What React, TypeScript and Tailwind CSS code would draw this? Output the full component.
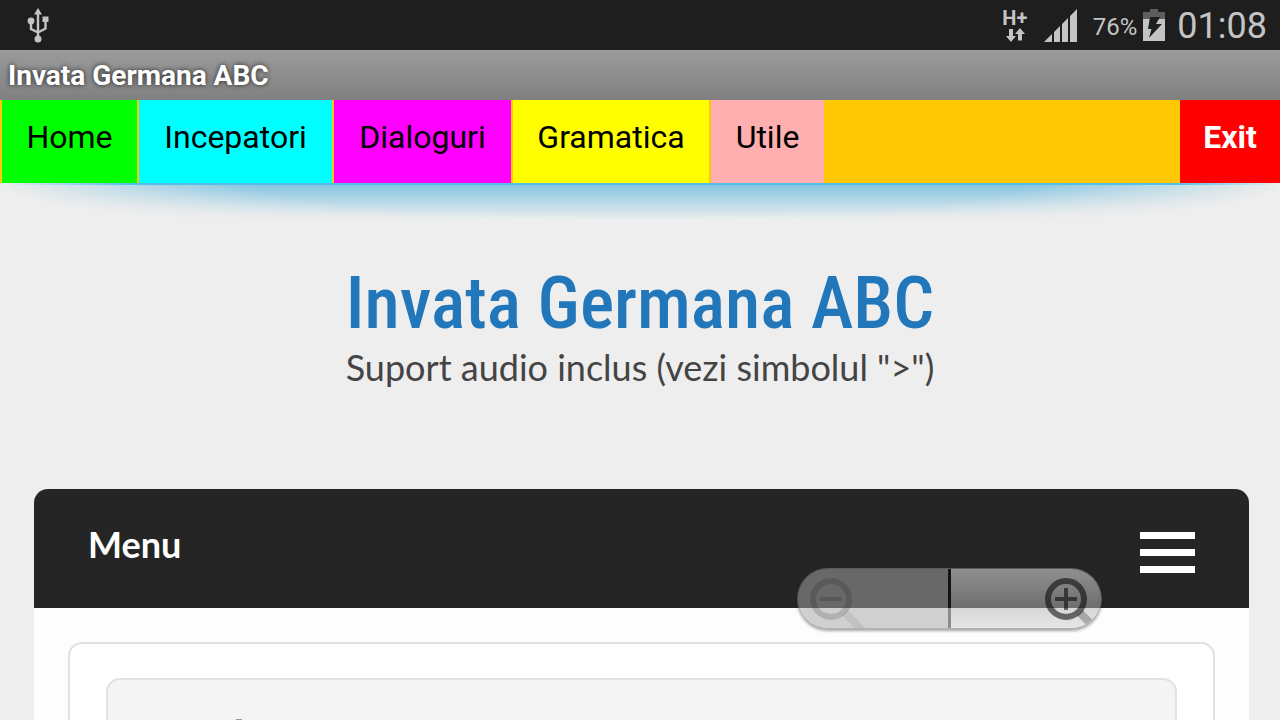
const tabs = [
  { label: "Home", width: "w-[135px]", color: "bg-[#00ff00]" },
  { label: "Incepatori", width: "w-[193px]", color: "bg-[#00ffff]" },
  { label: "Dialoguri", width: "w-[177px]", color: "bg-[#ff00ff]" },
  { label: "Gramatica", width: "w-[196px]", color: "bg-[#ffff00]" },
  { label: "Utile", width: "w-[113px]", color: "bg-[#ffafaf]" },
];

function UsbIcon() {
  return (
    <svg className="ml-[27px] h-[35px] w-[22px]" viewBox="0 0 22 35" fill="none" stroke="#c4c4c4" strokeWidth="2.4">
      <path d="M11 5V29M4 14V21L11 24.500L18.500 20.500V13" />
      <path d="M11 0L15 6.500H7Z" fill="#c4c4c4" stroke="none" />
      <circle cx="4" cy="13" r="3.4" fill="#c4c4c4" stroke="none" />
      <circle cx="11" cy="31" r="3.5" fill="#c4c4c4" stroke="none" />
      <path d="M15.500 8.500H21.500V14H15.500Z" fill="#c4c4c4" stroke="none" />
    </svg>
  );
}

function NetworkType() {
  return (
    <div className="flex w-7 flex-col items-center">
      <span className="text-[20px] leading-[20px] font-bold">H+</span>
      <svg className="h-[14px] w-5" viewBox="0 0 20 14" fill="#c4c4c4">
        <path d="M4 1H8V8H11L6 14L1 8H4Z" />
        <path d="M13 12.500H17V6H20L15 0L10 6H13Z" />
      </svg>
    </div>
  );
}

function SignalIcon() {
  return (
    <svg className="ml-[15px] h-[33px] w-[33px]" viewBox="0 0 33 33" fill="#c4c4c4">
      <path d="M0 33L8 25V33ZM10 23L16 17V33H10ZM18 15L24 9V33H18ZM26 7L33 0V33H26Z" />
    </svg>
  );
}

function BatteryIcon() {
  return (
    <svg className="ml-[6px] h-8 w-[22px]" viewBox="0 0 22 32">
      <path d="M0 3H7V0H15V3H22V10H0Z" fill="#5e5e5e" />
      <path d="M0 10H22V32H0Z" fill="#c4c4c4" />
      <path d="M7 8H17L13 15H19L6 29L8.500 20H5Z" fill="#1e1e1e" />
    </svg>
  );
}

function StatusBar() {
  return (
    <div className="flex h-[50px] items-center bg-[#1e1e1e] pr-[13px] font-[Roboto,sans-serif] text-[#c4c4c4]">
      <UsbIcon />
      <div className="ml-auto flex items-center">
        <NetworkType />
        <SignalIcon />
        <span className="ml-4 pt-[3px] text-[24px] leading-8">76%</span>
        <BatteryIcon />
        <span className="ml-3 pt-[2px] text-[36px] leading-[48px]">01:08</span>
      </div>
    </div>
  );
}

function Magnifier({ sign }: { sign: "plus" | "minus" }) {
  return (
    <svg className="h-[62px] w-14" viewBox="0 0 56 62" fill="none" stroke="currentColor">
      <path d="M35 45L53 63" strokeWidth="8" opacity="0.45" />
      <circle cx="21" cy="31" r="18" strokeWidth="6" />
      <path d={sign === "plus" ? "M10 31H32M21 20V42" : "M10 31H32"} strokeWidth="4" />
    </svg>
  );
}

function ZoomControls() {
  return (
    <div className="fixed top-[568px] right-[178px] flex h-[62px] w-[305px] overflow-hidden rounded-full border border-b-2 border-[#808080]/60 shadow-[0_1px_3px_rgba(0,0,0,0.35)]">
      <button
        aria-label="Zoom out"
        disabled
        className="flex w-[150px] items-center bg-[#a6a6a6]/52 pl-3 text-black/15"
      >
        <Magnifier sign="minus" />
      </button>
      <span className="w-[3px] bg-black/45" />
      <button
        aria-label="Zoom in"
        className="flex flex-1 items-center justify-end bg-linear-to-b from-[#f4f4f4]/52 via-[#b4b4b4]/52 via-65% to-[#d2d2d2]/52 text-black/55"
      >
        <Magnifier sign="plus" />
      </button>
    </div>
  );
}

export default function App() {
  return (
    <div className="h-screen overflow-hidden bg-[#eeeeee]">
      <StatusBar />
      <header className="flex h-[50px] items-center bg-linear-to-b from-[#9b9b9b] to-[#808080] px-2 pt-[2px] font-[Roboto,sans-serif] text-[28px] font-bold text-white [text-shadow:0_0_5px_#222]">
        Invata Germana ABC
      </header>

      <nav className="flex h-[83px] gap-[2px] bg-[#ffc805] pl-[2px] font-[Roboto,sans-serif] text-[32px]">
        {tabs.map((tab) => (
          <button key={tab.label} className={`${tab.width} ${tab.color} pb-[10px] text-black`}>
            {tab.label}
          </button>
        ))}
        <button className="ml-auto w-[100px] bg-[#ff0000] pb-[10px] font-bold text-white">Exit</button>
      </nav>

      {/* Blue glow under the tabs */}
      <div className="h-[2px] bg-[linear-gradient(90deg,transparent,#54bfe9_10%,#54bfe9_92%,transparent)]" />
      <div className="h-9 bg-linear-to-b from-[#85c5e0] to-[#eeeeee] mask-[radial-gradient(ellipse_50%_140%_at_50%_0%,#000_60%,transparent)]" />

      <section className="flex flex-col items-center pt-[43px] text-center">
        <h1 className="font-['Roboto_Condensed','Liberation_Sans_Narrow',sans-serif] text-[72px] leading-[80px] font-medium whitespace-nowrap text-[#2277bb]">
          Invata Germana ABC
        </h1>
        <p className="font-[Lato,sans-serif] text-[36px] leading-[46px] text-[#444444]">
          Suport audio inclus (vezi simbolul "&gt;")
        </p>
      </section>

      <main className="mt-[99px] mr-[31px] ml-[34px] font-[Lato,sans-serif]">
        <div className="flex h-[119px] items-center justify-between rounded-t-[14px] bg-[#252525] pr-[54px] pl-[54px]">
          <span className="pb-[10px] text-[36px] font-bold text-white">Menu</span>
          <button aria-label="Open menu" className="mt-2 flex w-[55px] flex-col gap-[10px]">
            <span className="h-[7px] bg-white" />
            <span className="h-[7px] bg-white" />
            <span className="h-[7px] bg-white" />
          </button>
        </div>
        <div className="bg-[#fdfdfd] px-[34px] pt-[34px]">
          <div className="rounded-t-[14px] border-2 border-[#e1e1e1] bg-white px-9 pt-[34px]">
            <div className="h-24 rounded-t-[14px] border-2 border-[#e1e1e1] bg-[#f4f4f4] pt-[39px] pl-[128px]">
              <div className="h-2 w-[6px] bg-[#999999]" />
            </div>
          </div>
        </div>
      </main>
      <ZoomControls />
    </div>
  );
}
